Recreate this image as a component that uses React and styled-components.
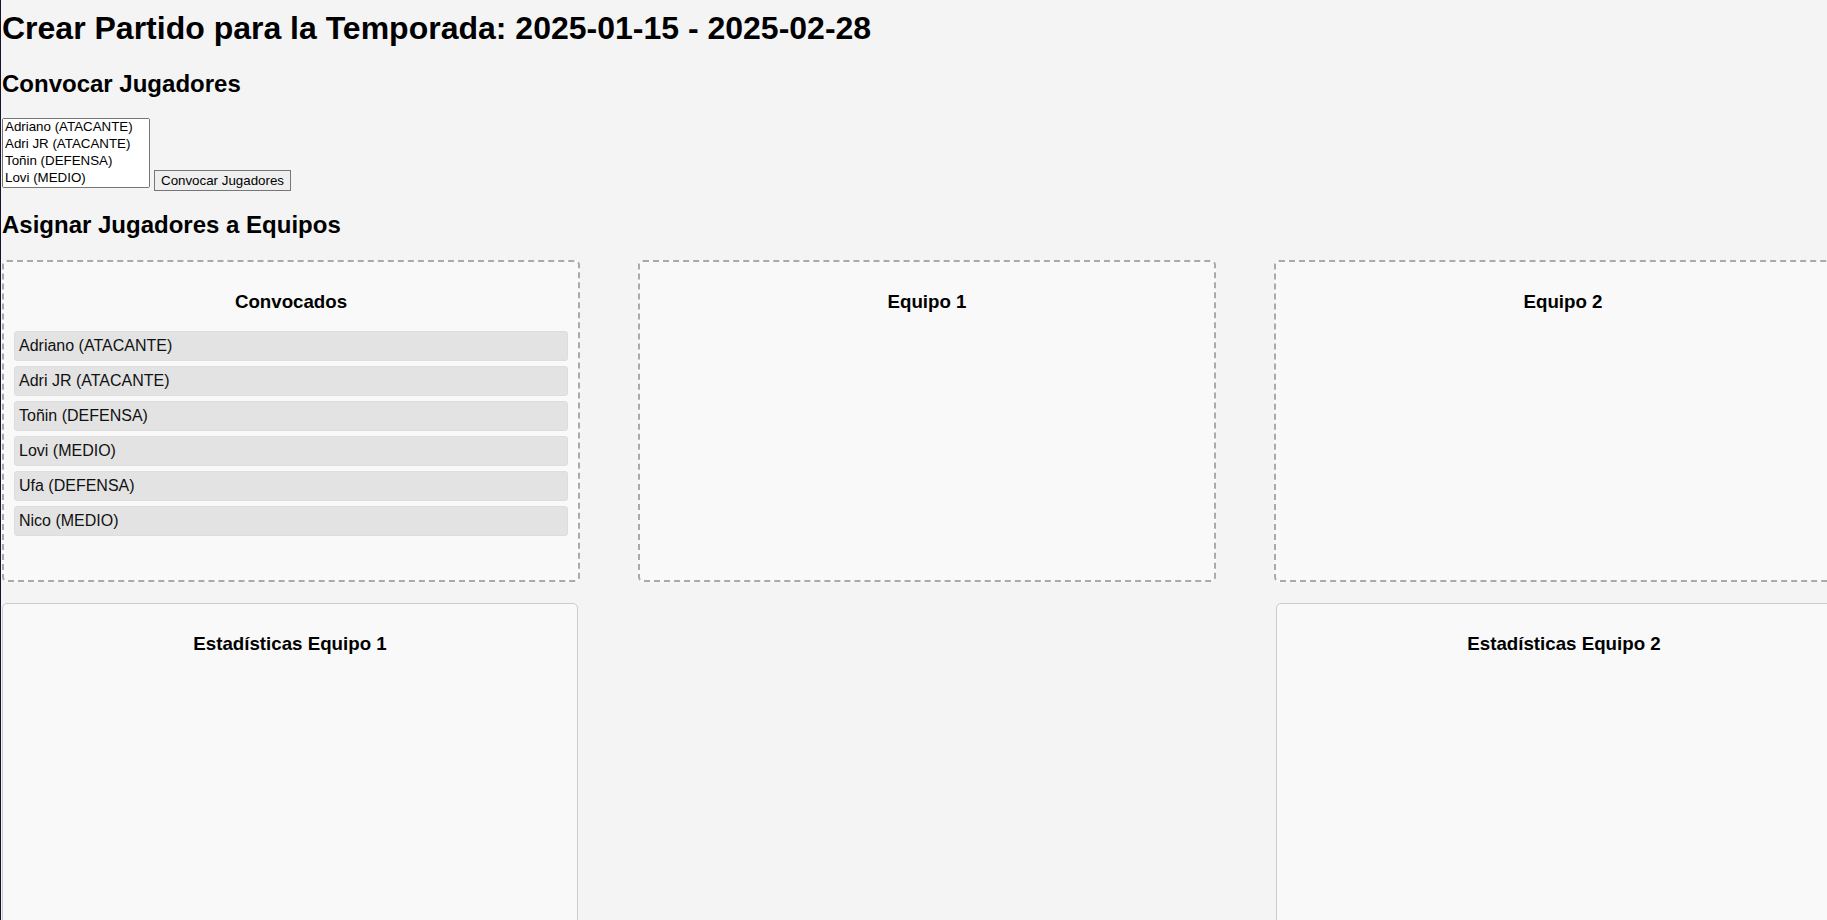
import React from "react"
import styled, { createGlobalStyle } from "styled-components"

const convocados = [
  "Adriano (ATACANTE)",
  "Adri JR (ATACANTE)",
  "Toñin (DEFENSA)",
  "Lovi (MEDIO)",
  "Ufa (DEFENSA)",
  "Nico (MEDIO)",
]

const App = () => {
  return (
    <>
      <GlobalStyle />
      <Page>
        <Title>Crear Partido para la Temporada: 2025-01-15 - 2025-02-28</Title>

        <SectionTitle $top={23} $bottom={20}>
          Convocar Jugadores
        </SectionTitle>
        <ConvocarRow>
          <PlayerSelect multiple defaultValue={[]}>
            {convocados.map((j) => (
              <option key={j} value={j}>
                {j}
              </option>
            ))}
          </PlayerSelect>
          <ConvocarButton type='button'>Convocar Jugadores</ConvocarButton>
        </ConvocarRow>

        <SectionTitle $top={23} $bottom={21}>
          Asignar Jugadores a Equipos
        </SectionTitle>
        <TeamsRow>
          <DropZone>
            <ZoneTitle>Convocados</ZoneTitle>
            {convocados.map((j) => (
              <PlayerItem key={j}>{j}</PlayerItem>
            ))}
          </DropZone>
          <DropZone>
            <ZoneTitle>Equipo 1</ZoneTitle>
          </DropZone>
          <DropZone>
            <ZoneTitle>Equipo 2</ZoneTitle>
          </DropZone>
        </TeamsRow>

        <StatsRow>
          <StatCard>
            <ZoneTitle>Estadísticas Equipo 1</ZoneTitle>
          </StatCard>
          <StatCard>
            <ZoneTitle>Estadísticas Equipo 2</ZoneTitle>
          </StatCard>
        </StatsRow>
      </Page>
    </>
  )
}

const GlobalStyle = createGlobalStyle`
  html, body {
    margin: 0;
    padding: 0;
    overflow: hidden;
    background: #f4f4f4;
  }
  body {
    font-family: "Liberation Sans", Arial, sans-serif;
    color: #000;
  }
`

const Page = styled.div`
  width: 1850px;
  min-height: 100vh;
  padding: 1px 0 0 1px;
  border-left: 1px solid #16162a;
`

const Title = styled.h1`
  font-size: 32px;
  margin: 9px 0 0;
`

const SectionTitle = styled.h2`
  font-size: 24px;
  margin: ${(p) => p.$top}px 0 ${(p) => p.$bottom}px;
`

const ConvocarRow = styled.div`
  display: flex;
  align-items: flex-end;
  gap: 4px;
  font-size: 16px;
`

const PlayerSelect = styled.select`
  width: 148px;
  height: 70px;
  margin: 0;
  padding: 0;
  border: 1px solid #767676;
  background: #fff;
  font-family: "Liberation Sans", Arial, sans-serif;
  font-size: 13.333px;
  color: #000;
  overflow-y: scroll;

  option {
    padding: 0 2px 1px;
  }

  &::-webkit-scrollbar {
    width: 12px;
  }
  &::-webkit-scrollbar-track {
    background: #fff;
  }
  &::-webkit-scrollbar-thumb {
    background: #c8ced6;
    border-radius: 4px;
    border: 2px solid #fff;
    border-top-width: 12px;
    border-bottom-width: 12px;
    border-radius: 6px;
  }
`

const ConvocarButton = styled.button`
  height: 21px;
  padding: 1px 6px;
  margin: 0 0 -3px;
  border: 1px solid #767676;
  border-radius: 0;
  background: #efefef;
  font-family: "Liberation Sans", Arial, sans-serif;
  font-size: 13.333px;
  color: #000;
`

const TeamsRow = styled.div`
  display: flex;
  justify-content: space-between;
`

const DropZone = styled.div`
  box-sizing: border-box;
  width: 578px;
  height: 322px;
  padding: 10px;
  border: 2px dashed #aaa;
  border-radius: 5px;
  background: #f9f9f9;
`

const ZoneTitle = styled.h3`
  font-size: 18.72px;
  margin: 18.72px 0;
  text-align: center;
`

const PlayerItem = styled.div`
  padding: 5px 4px;
  margin-bottom: 5px;
  line-height: 18px;
  font-size: 16px;
  color: #111;
  background: #e3e3e3;
  border: 1px solid #ddd;
  border-radius: 3px;
`

const StatsRow = styled.div`
  display: flex;
  justify-content: space-between;
  margin-top: 21px;
`

const StatCard = styled.div`
  box-sizing: border-box;
  width: 576px;
  min-height: 420px;
  padding: 10px;
  border: 1px solid #ccc;
  border-radius: 5px;
  background: #f9f9f9;
`

export default App
